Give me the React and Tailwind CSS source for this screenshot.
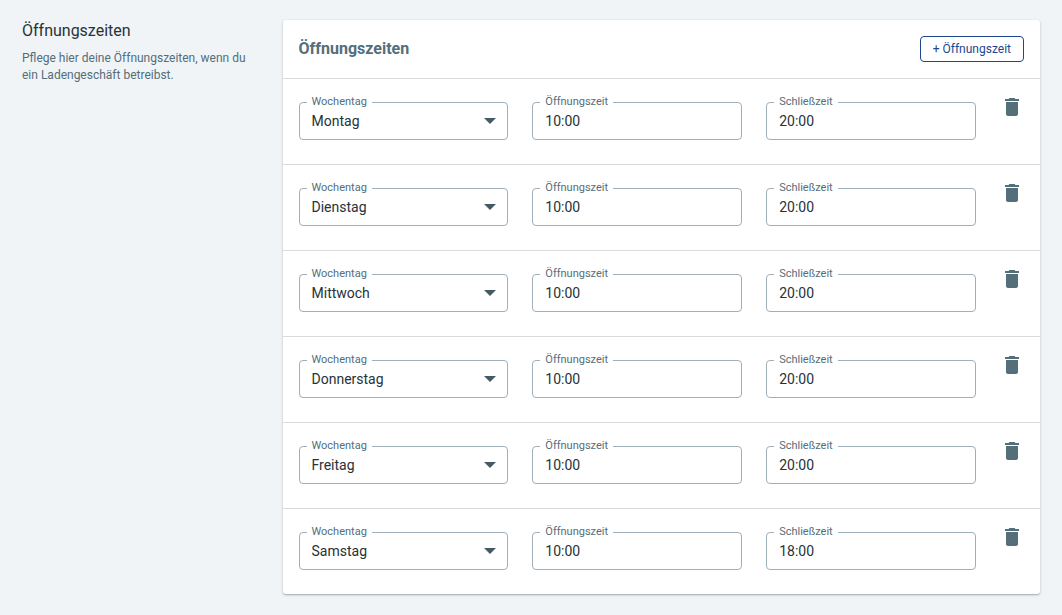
import { useState } from "react";

const weekdays = ["Montag", "Dienstag", "Mittwoch", "Donnerstag", "Freitag", "Samstag", "Sonntag"];

const initialHours = [
  { id: 1, day: "Montag", open: "10:00", close: "20:00" },
  { id: 2, day: "Dienstag", open: "10:00", close: "20:00" },
  { id: 3, day: "Mittwoch", open: "10:00", close: "20:00" },
  { id: 4, day: "Donnerstag", open: "10:00", close: "20:00" },
  { id: 5, day: "Freitag", open: "10:00", close: "20:00" },
  { id: 6, day: "Samstag", open: "10:00", close: "18:00" },
];

const controlClass =
  "block h-[38px] w-full appearance-none rounded border border-[#9fb0ba] bg-white px-3 text-sm text-[#263238] outline-none focus:border-[#1e4790]";

function Field({ id, label, children }) {
  return (
    <div className="relative mt-[7px]">
      {children}
      <label htmlFor={id} className="absolute -top-2 left-2 bg-white px-[5px] text-[11px] leading-4 text-[#546e7a]">
        {label}
      </label>
    </div>
  );
}

function TimeField({ id, label, value, onChange }) {
  return (
    <Field id={id} label={label}>
      <input id={id} type="text" className={controlClass} value={value} onChange={(e) => onChange(e.target.value)} />
    </Field>
  );
}

function DayField({ id, value, onChange }) {
  return (
    <Field id={id} label="Wochentag">
      <select id={id} className={controlClass} value={value} onChange={(e) => onChange(e.target.value)}>
        {weekdays.map((day) => (
          <option key={day}>{day}</option>
        ))}
      </select>
      <svg viewBox="0 0 12 6" className="pointer-events-none absolute top-4 right-3 h-[6px] w-3 fill-[#455a64]">
        <path d="M0 0h12L6 6z" />
      </svg>
    </Field>
  );
}

function HoursRow({ entry, onChange, onRemove }) {
  return (
    <div className="grid grid-cols-[1fr_1fr_1fr_24px] items-start gap-6 border-t border-[#d9dcde] px-4 pt-4 pb-6">
      <DayField id={`day-${entry.id}`} value={entry.day} onChange={(day) => onChange({ day })} />
      <TimeField
        id={`open-${entry.id}`}
        label="Öffnungszeit"
        value={entry.open}
        onChange={(open) => onChange({ open })}
      />
      <TimeField
        id={`close-${entry.id}`}
        label="Schließzeit"
        value={entry.close}
        onChange={(close) => onChange({ close })}
      />
      <button type="button" aria-label="Löschen" className="cursor-pointer" onClick={onRemove}>
        <svg viewBox="0 0 24 24" className="size-6 fill-[#546e7a]">
          <path d="M6 19c0 1.1.9 2 2 2h8c1.1 0 2-.9 2-2V7H6v12zM19 4h-3.5l-1-1h-5l-1 1H5v2h14V4z" />
        </svg>
      </button>
    </div>
  );
}

export default function App() {
  const [hours, setHours] = useState(initialHours);

  const update = (id, patch) => setHours(hours.map((h) => (h.id === id ? { ...h, ...patch } : h)));
  const remove = (id) => setHours(hours.filter((h) => h.id !== id));
  const add = () => setHours([...hours, { id: Date.now(), day: "Montag", open: "10:00", close: "20:00" }]);

  return (
    <div className="min-h-screen bg-[#f0f4f7] px-[22px] pt-5 font-[Roboto,sans-serif]">
      <div className="grid grid-cols-4 gap-6">
        <div>
          <h1 className="text-base leading-[22px] text-[#263238]">Öffnungszeiten</h1>
          <p className="mt-2 text-xs leading-[17px] text-[#546e7a]">
            Pflege hier deine Öffnungszeiten, wenn du ein Ladengeschäft betreibst.
          </p>
        </div>
        <section className="col-span-3 rounded-[3px] bg-white shadow-[0_1px_3px_rgba(0,0,0,0.2),0_1px_1px_rgba(0,0,0,0.14)]">
          <header className="flex items-center justify-between px-4 py-4">
            <h2 className="text-base leading-[26px] font-bold text-[#546e7a]">Öffnungszeiten</h2>
            <button
              type="button"
              className="h-[26px] cursor-pointer rounded border border-[#1e4790] px-3 text-xs text-[#1e4790]"
              onClick={add}
            >
              + Öffnungszeit
            </button>
          </header>
          {hours.map((entry) => (
            <HoursRow
              key={entry.id}
              entry={entry}
              onChange={(patch) => update(entry.id, patch)}
              onRemove={() => remove(entry.id)}
            />
          ))}
        </section>
      </div>
    </div>
  );
}
